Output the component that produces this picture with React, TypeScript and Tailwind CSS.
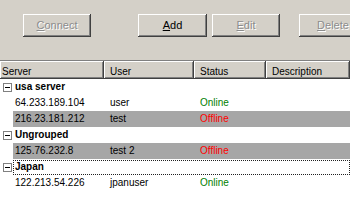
import React from "react";

const font = { fontFamily: '"Liberation Sans", Arial, sans-serif' };

function Btn({ label, u, disabled, className }: { label: string; u: number; disabled?: boolean; className?: string }) {
  const a = label.slice(0, u);
  const b = label.slice(u, u + 1);
  const c = label.slice(u + 1);
  return (
    <div
      className={
        "h-[23px] w-[68px] shrink-0 flex items-center justify-center bg-[#d4d0c8] text-[11px] shadow-[inset_-1px_-1px_#404040,inset_1px_1px_#ffffff,inset_-2px_-2px_#808080] " +
        (disabled ? "text-[#8c8c8c] [text-shadow:1px_1px_0_#ffffff] " : "text-black ") +
        (className ?? "")
      }
    >
      <span>
        {a}
        <span className="underline underline-offset-1">{b}</span>
        {c}
      </span>
    </div>
  );
}

function Minus() {
  return (
    <div className="w-[9px] h-[9px] border border-[#808080] bg-white flex items-center justify-center shrink-0">
      <div className="w-[5px] h-px bg-black" />
    </div>
  );
}

function Group({ label, focus }: { label: string; focus?: boolean }) {
  return (
    <div className="h-[16px] flex items-center">
      <div className="w-[13px] pl-[3px] flex items-center">
        <Minus />
      </div>
      <div
        className={
          "flex-1 h-[15px] flex items-center pl-px font-bold text-black border " +
          (focus ? "border-dotted border-[#202020]" : "border-transparent")
        }
      >
        {label}
      </div>
    </div>
  );
}

function Item({ server, user, online, sel }: { server: string; user: string; online: boolean; sel?: boolean }) {
  return (
    <div className="h-[16px] pl-[13px] flex">
      <div className={"flex-1 flex items-center " + (sel ? "bg-[#a6a6a6]" : "")}>
        <div className="w-[91px] pl-[2px] shrink-0">{server}</div>
        <div className="w-[90px] pl-[6px] shrink-0">{user}</div>
        <div className={"w-[72px] pl-[6px] shrink-0 " + (online ? "text-[#008000]" : "text-[#ff0000]")}>
          {online ? "Online" : "Offline"}
        </div>
      </div>
    </div>
  );
}

function Head({ label, w, pl }: { label: string; w?: string; pl: string }) {
  return (
    <div
      className={
        "h-full flex items-center pt-[3px] shadow-[inset_-1px_-1px_#404040,inset_1px_1px_#ffffff,inset_-2px_-2px_#808080] " +
        (w ?? "flex-1") +
        " " +
        pl
      }
    >
      {label}
    </div>
  );
}

export default function App() {
  return (
    <div className="w-[350px] h-[202px] overflow-hidden bg-white text-[10px] text-black leading-none" style={font}>
      <div className="h-[60px] bg-[#d4d0c8] flex items-start pt-[14px] pl-[23px] overflow-hidden">
        <Btn label="Connect" u={0} disabled />
        <Btn label="Add" u={0} className="ml-[47px] w-[69px]" />
        <Btn label="Edit" u={0} disabled className="ml-[5px]" />
        <Btn label="Delete" u={0} disabled className="ml-[19px]" />
      </div>
      <div className="h-px bg-[#808080]" />
      <div className="h-[18px] flex bg-[#d4d0c8]">
        <Head label="Server" w="w-[104px]" pl="pl-[2px]" />
        <Head label="User" w="w-[90px]" pl="pl-[6px]" />
        <Head label="Status" w="w-[72px]" pl="pl-[6px]" />
        <Head label="Description" pl="pl-[6px]" />
      </div>
      <div className="flex flex-col">
        <Group label="usa server" />
        <Item server="64.233.189.104" user="user" online />
        <Item server="216.23.181.212" user="test" online={false} sel />
        <Group label="Ungrouped" />
        <Item server="125.76.232.8" user="test 2" online={false} sel />
        <Group label="Japan" focus />
        <Item server="122.213.54.226" user="jpanuser" online />
      </div>
    </div>
  );
}
